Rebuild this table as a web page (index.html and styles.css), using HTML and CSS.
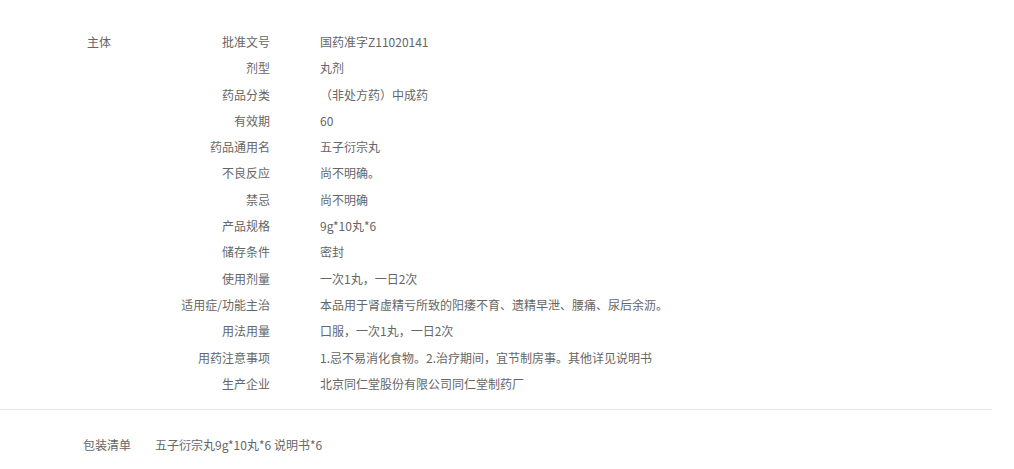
FILE: index.html
```html
<!DOCTYPE html>
<html lang="zh-CN">

<head>
    <meta charset="UTF-8">
    <meta name="viewport" content="width=device-width, initial-scale=1.0">
    <title>规格参数</title>
    <link rel="stylesheet" href="styles.css">
</head>

<body>
    <div id="spec-wrap">
        <div class="spec-group">
            <div class="group-title">主体</div>
            <dl class="spec-list">
                <div class="spec-row"><dt>批准文号</dt><dd>国药准字Z11020141</dd></div>
                <div class="spec-row"><dt>剂型</dt><dd>丸剂</dd></div>
                <div class="spec-row"><dt>药品分类</dt><dd>（非处方药）中成药</dd></div>
                <div class="spec-row"><dt>有效期</dt><dd>60</dd></div>
                <div class="spec-row"><dt>药品通用名</dt><dd>五子衍宗丸</dd></div>
                <div class="spec-row"><dt>不良反应</dt><dd>尚不明确。</dd></div>
                <div class="spec-row"><dt>禁忌</dt><dd>尚不明确</dd></div>
                <div class="spec-row"><dt>产品规格</dt><dd>9g*10丸*6</dd></div>
                <div class="spec-row"><dt>储存条件</dt><dd>密封</dd></div>
                <div class="spec-row"><dt>使用剂量</dt><dd>一次1丸，一日2次</dd></div>
                <div class="spec-row"><dt>适用症/功能主治</dt><dd>本品用于肾虚精亏所致的阳痿不育、遗精早泄、腰痛、尿后余沥。</dd></div>
                <div class="spec-row"><dt>用法用量</dt><dd>口服，一次1丸，一日2次</dd></div>
                <div class="spec-row"><dt>用药注意事项</dt><dd>1.忌不易消化食物。2.治疗期间，宜节制房事。其他详见说明书</dd></div>
                <div class="spec-row"><dt>生产企业</dt><dd>北京同仁堂股份有限公司同仁堂制药厂</dd></div>
            </dl>
        </div>

        <div class="package">
            <span class="package-title">包装清单</span>
            <span class="package-text">五子衍宗丸9g*10丸*6 说明书*6</span>
        </div>
    </div>
</body>

</html>
```

FILE: styles.css
```css
body {
    margin: 0;
    padding: 0;
    font-family: 'Noto Sans CJK SC', 'Liberation Sans', sans-serif;
    font-size: 12px;
    color: #666;
    background-color: #fff;
}

#spec-wrap {
    width: 992px;
}

.spec-group {
    display: flex;
    padding: 29px 0 12px 87px;
    border-bottom: 1px solid #e8e8e8;
}

.group-title {
    width: 83px;
    line-height: 26.3px;
}

.spec-list {
    margin: 0;
    padding: 0;
}

.spec-row {
    display: flex;
    line-height: 26.3px;
}

.spec-row dt {
    width: 100px;
    text-align: right;
    white-space: nowrap;
}

.spec-row dd {
    margin: 0 0 0 50px;
    white-space: nowrap;
}

.package {
    display: flex;
    padding: 22px 0 0 83px;
    line-height: 26px;
}

.package-title {
    margin-right: 24px;
}
```
